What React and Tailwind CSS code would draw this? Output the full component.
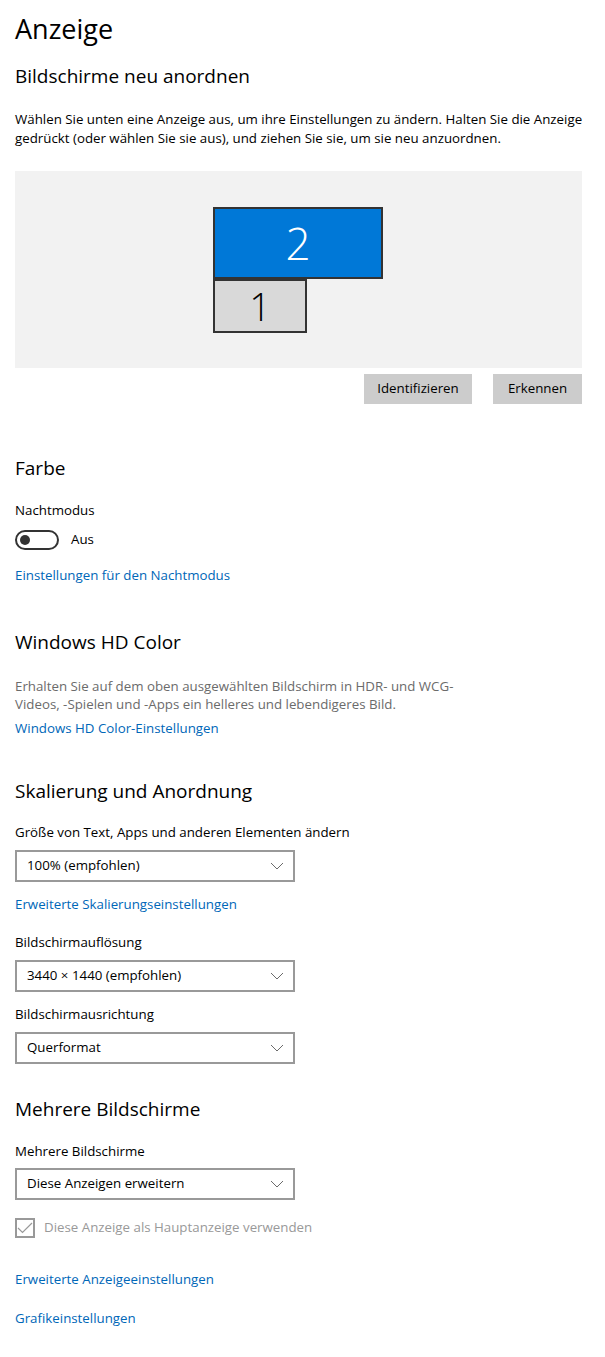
import React from 'react';

const font = { fontFamily: '"Open Sans", "Noto Sans", sans-serif' };

const Chevron = () => (
  <svg width="14" height="8" viewBox="0 0 14 8" fill="none">
    <path d="M1 1 L7 7 L13 1" stroke="#6b6b6b" strokeWidth="1" />
  </svg>
);

const Select = ({ value, className = '' }) => (
  <div className={`w-[280px] h-[32px] border-2 border-[#999999] flex items-center justify-between pl-[10px] pr-[9px] text-[13.3px] text-black ${className}`}>
    <span>{value}</span>
    <Chevron />
  </div>
);

const Heading = ({ children, className = '' }) => (
  <h2 className={`text-[19px] leading-[28px] text-black ${className}`}>{children}</h2>
);

const Label = ({ children, className = '' }) => (
  <p className={`text-[13.3px] leading-[20px] text-black ${className}`}>{children}</p>
);

const LinkText = ({ children, className = '' }) => (
  <a className={`block text-[13.3px] leading-[20px] text-[#0067b8] ${className}`}>{children}</a>
);

export default function App() {
  return (
    <div className="min-h-screen bg-white px-[15px] pt-[11px] pb-10" style={font}>
      <h1 className="text-[27px] leading-[36px] text-black">Anzeige</h1>

      <Heading className="mt-[15px]">Bildschirme neu anordnen</Heading>
      <p className="mt-[20px] text-[13.3px] leading-[19px] text-black w-[575px]">
        Wählen Sie unten eine Anzeige aus, um ihre Einstellungen zu ändern. Halten Sie die Anzeige gedrückt (oder wählen Sie sie aus), und ziehen Sie sie, um sie neu anzuordnen.
      </p>

      {/* Display arrangement canvas */}
      <div className="relative mt-[23px] w-[567px] h-[197px] bg-[#f2f2f2]">
        <div className="absolute left-[198px] top-[36px] w-[170px] h-[72px] bg-[#0078d7] border-2 border-[#333333] flex items-center justify-center">
          <span className="text-[44px] leading-none font-light text-white">2</span>
        </div>
        <div className="absolute left-[198px] top-[108px] w-[94px] h-[54px] bg-[#d9d9d9] border-2 border-[#333333] flex items-center justify-center">
          <span className="text-[38px] leading-none font-light text-black">1</span>
        </div>
      </div>

      <div className="mt-[6px] w-[567px] flex justify-end gap-[21px]">
        <button className="w-[108px] h-[30px] bg-[#cccccc] text-[13.3px] text-black">Identifizieren</button>
        <button className="w-[89px] h-[30px] bg-[#cccccc] text-[13.3px] text-black">Erkennen</button>
      </div>

      <Heading className="mt-[50px]">Farbe</Heading>
      <Label className="mt-[18px]">Nachtmodus</Label>
      <div className="mt-[10px] flex items-center gap-[12px]">
        <div className="w-[44px] h-[20px] rounded-full border-2 border-[#333333] flex items-center pl-[3px]">
          <div className="w-[10px] h-[10px] rounded-full bg-[#333333]" />
        </div>
        <span className="text-[13.3px] text-black">Aus</span>
      </div>
      <LinkText className="mt-[15px]">Einstellungen für den Nachtmodus</LinkText>

      <Heading className="mt-[43px]">Windows HD Color</Heading>
      <p className="mt-[21px] text-[13.3px] leading-[18px] text-[#6b6b6b] w-[470px]">
        Erhalten Sie auf dem oben ausgewählten Bildschirm in HDR- und WCG-Videos, -Spielen und -Apps ein helleres und lebendigeres Bild.
      </p>
      <LinkText className="mt-[5px]">Windows HD Color-Einstellungen</LinkText>

      <Heading className="mt-[39px]">Skalierung und Anordnung</Heading>
      <Label className="mt-[17px]">Größe von Text, Apps und anderen Elementen ändern</Label>
      <Select className="mt-[8px]" value="100% (empfohlen)" />
      <LinkText className="mt-[12px]">Erweiterte Skalierungseinstellungen</LinkText>
      <Label className="mt-[18px]">Bildschirmauflösung</Label>
      <Select className="mt-[8px]" value="3440 × 1440 (empfohlen)" />
      <Label className="mt-[12px]">Bildschirmausrichtung</Label>
      <Select className="mt-[8px]" value="Querformat" />

      <Heading className="mt-[31px]">Mehrere Bildschirme</Heading>
      <Label className="mt-[18px]">Mehrere Bildschirme</Label>
      <Select className="mt-[7px]" value="Diese Anzeigen erweitern" />
      <div className="mt-[18px] flex items-center gap-[9px]">
        <div className="w-[20px] h-[20px] border-2 border-[#999999] flex items-center justify-center">
          <svg width="16" height="12" viewBox="0 0 16 12" fill="none">
            <path d="M1 6 L5.5 10.5 L15 1" stroke="#999999" strokeWidth="1.2" />
          </svg>
        </div>
        <span className="text-[13.3px] text-[#999999]">Diese Anzeige als Hauptanzeige verwenden</span>
      </div>

      <LinkText className="mt-[31px]">Erweiterte Anzeigeeinstellungen</LinkText>
      <LinkText className="mt-[19px]">Grafikeinstellungen</LinkText>
    </div>
  );
}
